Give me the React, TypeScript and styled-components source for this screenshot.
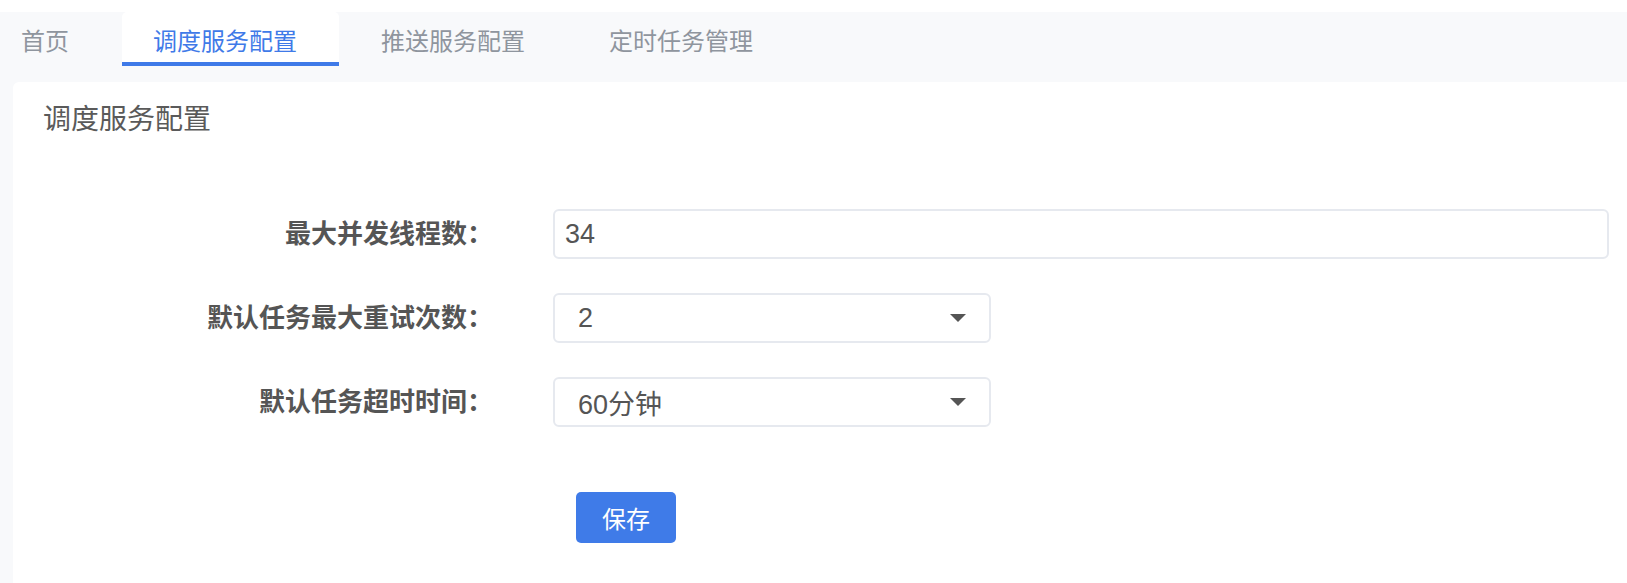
import React, { useState } from 'react';
import styled, { createGlobalStyle } from 'styled-components';

const GlobalStyle = createGlobalStyle`
  html, body {
    margin: 0;
    padding: 0;
    background: #ffffff;
    font-family: "Liberation Sans", "Noto Sans CJK SC", sans-serif;
  }
`;

const Page = styled.div`
  height: 583px;
  padding-top: 12px;
  box-sizing: border-box;
  background: #ffffff;
  overflow: hidden;
`;

const Shell = styled.div`
  height: 100%;
  display: flex;
  flex-direction: column;
  background: #f8f9fb;
`;

const TabBar = styled.div`
  display: flex;
  height: 54px;
  margin-bottom: 16px;
  flex-shrink: 0;
`;

const Tab = styled.div<{ $active?: boolean; $first?: boolean }>`
  display: flex;
  align-items: center;
  padding: 0 42px 0 ${({ $first }) => ($first ? '21px' : '31px')};
  margin-right: 11px;
  font-family: "Noto Sans CJK SC", sans-serif;
  font-size: 24px;
  color: ${({ $active }) => ($active ? '#3f7ae8' : '#8f959e')};
  background: ${({ $active }) => ($active ? '#ffffff' : 'transparent')};
  border-radius: 5px 5px 0 0;
  box-shadow: ${({ $active }) => ($active ? 'inset 0 -4px 0 #3f7ae8' : 'none')};
  cursor: pointer;
`;

const Card = styled.div`
  flex: 1;
  margin-left: 13px;
  background: #ffffff;
  border-top-left-radius: 6px;
  padding: 14px 18px 0 0;
`;

const Title = styled.h2`
  margin: 0;
  padding-left: 30px;
  font-family: "Noto Sans CJK SC", sans-serif;
  font-size: 28px;
  font-weight: 400;
  line-height: 42px;
  color: #5a5a5a;
`;

const Form = styled.form`
  display: flex;
  flex-direction: column;
  gap: 34px;
  margin-top: 71px;
`;

const Row = styled.div`
  display: flex;
  align-items: center;
`;

const Label = styled.label`
  width: 480px;
  margin-right: 60px;
  flex-shrink: 0;
  text-align: right;
  font-family: "Noto Sans CJK SC", sans-serif;
  font-size: 26px;
  font-weight: 700;
  line-height: 40px;
  color: #555555;
  padding-bottom: 4px;
`;

const TextInput = styled.input`
  flex: 1;
  height: 50px;
  box-sizing: border-box;
  padding: 0 10px;
  border: 2px solid #e6e9ef;
  border-radius: 6px;
  font-family: "Liberation Sans", "Noto Sans CJK SC", sans-serif;
  font-size: 27px;
  color: #555555;
  outline: none;
`;

const SelectBox = styled.div`
  width: 438px;
  height: 50px;
  box-sizing: border-box;
  display: flex;
  align-items: center;
  justify-content: space-between;
  padding: 0 23px 0 23px;
  border: 2px solid #e6e9ef;
  border-radius: 6px;
  font-family: "Liberation Sans", "Noto Sans CJK SC", sans-serif;
  font-size: 27px;
  color: #555555;
  cursor: pointer;
`;

const Caret = styled.svg`
  width: 16px;
  height: 8px;
  fill: #555555;
`;

const ButtonRow = styled.div`
  padding-left: 563px;
  margin-top: 65px;
`;

const SaveButton = styled.button`
  width: 100px;
  height: 51px;
  border: none;
  border-radius: 5px;
  background: #3f7be8;
  color: #ffffff;
  font-family: "Noto Sans CJK SC", sans-serif;
  font-size: 24px;
  cursor: pointer;
`;

const tabs = ['首页', '调度服务配置', '推送服务配置', '定时任务管理'];

const Select = ({ value }: { value: string }) => (
  <SelectBox>
    <span>{value}</span>
    <Caret viewBox="0 0 16 8">
      <polygon points="0,0 16,0 8,8" />
    </Caret>
  </SelectBox>
);

const App = () => {
  const [active, setActive] = useState(1);
  const [threads, setThreads] = useState('34');

  return (
    <Page>
      <GlobalStyle />
      <Shell>
        <TabBar>
          {tabs.map((t, i) => (
            <Tab key={t} $active={i === active} $first={i === 0} onClick={() => setActive(i)}>
              {t}
            </Tab>
          ))}
        </TabBar>
        <Card>
          <Title>调度服务配置</Title>
          <Form onSubmit={(e) => e.preventDefault()}>
            <Row>
              <Label htmlFor="threads">最大并发线程数：</Label>
              <TextInput id="threads" value={threads} onChange={(e) => setThreads(e.target.value)} />
            </Row>
            <Row>
              <Label>默认任务最大重试次数：</Label>
              <Select value="2" />
            </Row>
            <Row>
              <Label>默认任务超时时间：</Label>
              <Select value="60分钟" />
            </Row>
          </Form>
          <ButtonRow>
            <SaveButton type="button">保存</SaveButton>
          </ButtonRow>
        </Card>
      </Shell>
    </Page>
  );
};

export default App;
